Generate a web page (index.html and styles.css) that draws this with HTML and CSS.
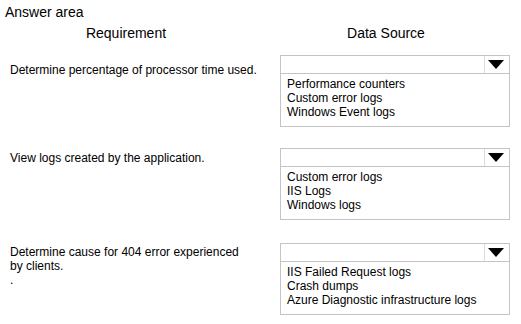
FILE: index.html
```html
<!DOCTYPE html>
<html lang="en">
	<head>
		<meta charset="UTF-8" />
		<meta name="viewport" content="width=device-width, initial-scale=1.0" />
		<title>Answer area</title>
		<link rel="stylesheet" href="styles.css">
	</head>
	<body>
		<div class="answer">
			<div class="title">Answer area</div>

			<div class="heads">
				<div class="head">Requirement</div>
				<div class="head">Data Source</div>
			</div>

			<div class="row row-first">
				<div class="req">Determine percentage of processor time used.</div>
				<div class="select">
					<div class="select-top">
						<div class="select-value"></div>
						<div class="select-arrow"><span class="triangle"></span></div>
					</div>
					<div class="options">
						<div class="option">Performance counters</div>
						<div class="option">Custom error logs</div>
						<div class="option">Windows Event logs</div>
					</div>
				</div>
			</div>

			<div class="row row-second">
				<div class="req">View logs created by the application.</div>
				<div class="select">
					<div class="select-top">
						<div class="select-value"></div>
						<div class="select-arrow"><span class="triangle"></span></div>
					</div>
					<div class="options">
						<div class="option">Custom error logs</div>
						<div class="option">IIS Logs</div>
						<div class="option">Windows logs</div>
					</div>
				</div>
			</div>

			<div class="row row-third">
				<div class="req">Determine cause for 404 error experienced<br />by clients.<br />.</div>
				<div class="select">
					<div class="select-top">
						<div class="select-value"></div>
						<div class="select-arrow"><span class="triangle"></span></div>
					</div>
					<div class="options">
						<div class="option">IIS Failed Request logs</div>
						<div class="option">Crash dumps</div>
						<div class="option">Azure Diagnostic infrastructure logs</div>
					</div>
				</div>
			</div>
		</div>
	</body>
</html>
```

FILE: styles.css
```css
* {
	margin: 0;
	padding: 0;
	box-sizing: border-box;
}

body {
	font-family: 'Liberation Sans', Arial, Helvetica, sans-serif;
	background: #fff;
	color: #000;
}

.answer {
	width: 521px;
	padding-top: 4px;
}

.title {
	font-size: 14px;
	line-height: 16px;
	padding-left: 5px;
}

.heads {
	display: grid;
	grid-template-columns: 252px 268px;
	margin-top: 5px;
}

.head {
	font-size: 14px;
	line-height: 16px;
	text-align: center;
}

.row {
	display: grid;
	grid-template-columns: 280px 230px;
	font-size: 12px;
	line-height: 14px;
}

.row-first {
	margin-top: 14px;
}

.row-second {
	margin-top: 21px;
}

.row-third {
	margin-top: 23px;
}

.req {
	padding-left: 10px;
}

.row-first .req {
	padding-top: 8px;
}

.row-second .req {
	padding-top: 3px;
}

.row-third .req {
	padding-top: 2px;
}

.select {
	border: 1px solid #c4c4c4;
}

.select-top {
	display: flex;
	height: 18px;
	border-bottom: 1px solid #c4c4c4;
}

.select-value {
	flex: 1;
}

.select-arrow {
	width: 25px;
	border-left: 1px solid #dcdcdc;
	display: flex;
	align-items: center;
	justify-content: center;
}

.triangle {
	width: 0;
	height: 0;
	border-left: 8px solid transparent;
	border-right: 8px solid transparent;
	border-top: 9px solid #000;
	margin-right: 2px;
}

.options {
	padding: 3px 6px 7px;
}
```
